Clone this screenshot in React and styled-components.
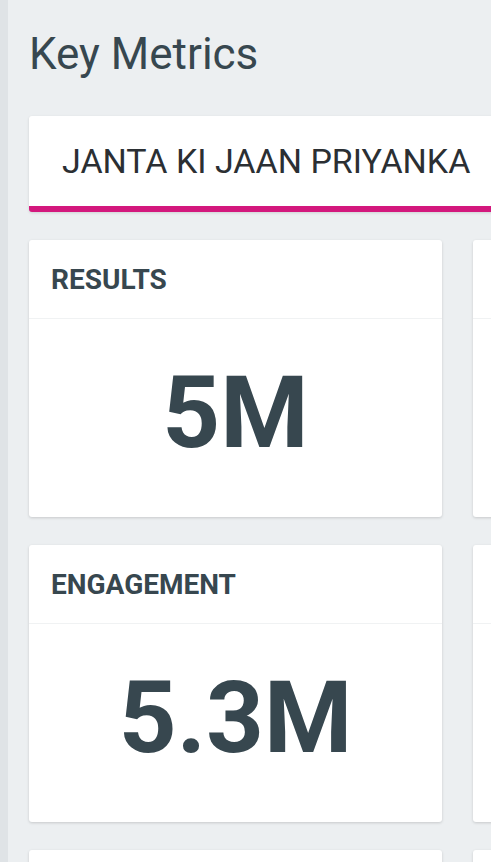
import styled, { createGlobalStyle } from 'styled-components'

const GlobalStyle = createGlobalStyle`
    html, body {
        margin:0;
        padding:0;
        background:#eceff1;
        overflow:hidden;
    }
    body {
        font-family:Roboto, "Noto Sans", sans-serif;
    }
`;

const Page = styled.div`
    width:491px;
    height:862px;
    display:flex;
    overflow:hidden;
    background:#eceff1;
`;

const Rail = styled.div`
    width:8px;
    flex-shrink:0;
    background:#dfe3e6;
`;

const Content = styled.div`
    flex:1;
    padding:28px 0 0 21px;
    display:flex;
    flex-direction:column;
    min-width:0;
    & > * {
        flex-shrink:0;
    }
`;

const Heading = styled.h1`
    margin:0;
    font-size:44px;
    line-height:52px;
    font-weight:400;
    color:#37474f;
`;

const TabBar = styled.div`
    margin-top:36px;
    width:600px;
    height:90px;
    background:#fff;
    border-bottom:6px solid #d3187d;
    border-radius:3px 0 0 3px;
    box-shadow:0 1px 3px rgba(0,0,0,0.12);
    display:flex;
    align-items:center;
    padding-left:33px;
    box-sizing:content-box;
`;

const Tab = styled.span`
    font-size:34px;
    font-weight:400;
    color:#2b2f33;
`;

const Grid = styled.div`
    margin-top:28px;
    display:grid;
    grid-template-columns:413px 413px;
    column-gap:31px;
    row-gap:28px;
`;

const Card = styled.div`
    background:#fff;
    border-radius:3px;
    box-shadow:0 1px 3px rgba(0,0,0,0.16);
    display:flex;
    flex-direction:column;
    height:277px;
`;

const CardHead = styled.div`
    height:78px;
    border-bottom:1px solid #f0f2f3;
    display:flex;
    align-items:center;
    padding-left:22px;
    font-size:28px;
    font-weight:700;
    color:#37474f;
`;

const CardBody = styled.div`
    flex:1;
    display:flex;
    align-items:center;
    justify-content:center;
    padding-bottom:12px;
    font-size:101px;
    font-weight:700;
    color:#37474f;
`;

const metrics = [
    { label: 'RESULTS', value: '5M' },
    { label: '', value: '' },
    { label: 'ENGAGEMENT', value: '5.3M' },
    { label: '', value: '' },
    { label: '', value: '' },
    { label: '', value: '' },
]

const App = () => {
    return (
        <Page>
            <GlobalStyle />
            <Rail />
            <Content>
                <Heading>Key Metrics</Heading>
                <TabBar>
                    <Tab>JANTA KI JAAN PRIYANKA</Tab>
                </TabBar>
                <Grid>
                    {metrics.map((m, i) => (
                        <Card key={i}>
                            <CardHead>{m.label}</CardHead>
                            <CardBody>{m.value}</CardBody>
                        </Card>
                    ))}
                </Grid>
            </Content>
        </Page>
    )
}

export default App
